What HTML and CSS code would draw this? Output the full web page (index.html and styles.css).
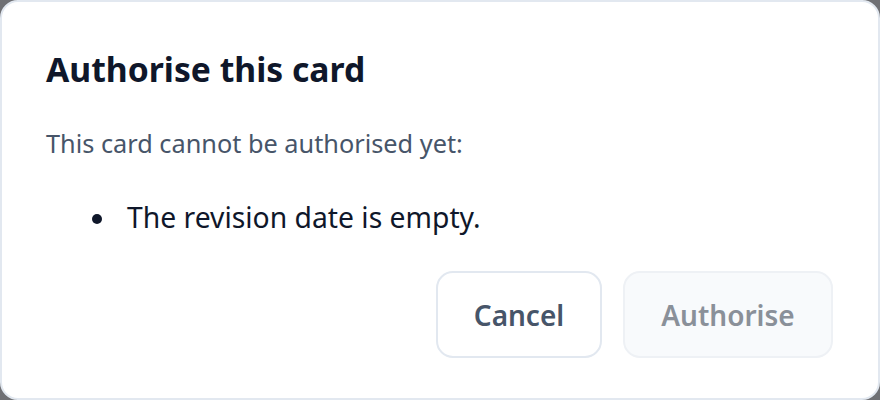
FILE: index.html
```html
<!DOCTYPE html>
<html lang="en">
<head>
<meta charset="utf-8">
<title>Authorise this card</title>
<link rel="stylesheet" href="styles.css">
</head>
<body>
<div class="dialog">
  <h1 class="title">Authorise this card</h1>
  <p class="lead">This card cannot be authorised yet:</p>
  <ul class="reasons">
    <li class="reason">The revision date is empty.</li>
  </ul>
  <div class="actions">
    <button class="btn btn-cancel" type="button">Cancel</button>
    <button class="btn btn-primary" type="button" disabled>Authorise</button>
  </div>
</div>
</body>
</html>
```

FILE: styles.css
```css
html, body {
  margin: 0;
  padding: 0;
  background: #6f7074;
}
body {
  width: 880px;
  height: 400px;
  font-family: "Noto Sans", "Open Sans", "DejaVu Sans", sans-serif;
}
.dialog {
  box-sizing: border-box;
  width: 880px;
  height: 400px;
  background: #ffffff;
  border: 2px solid #e2e8f0;
  border-radius: 18px;
  padding: 43px 45px 0 44px;
  display: flex;
  flex-direction: column;
}
.title {
  margin: 0;
  font-size: 33.7px;
  line-height: 48px;
  font-weight: 700;
  color: #0f172a;
}
.lead {
  margin: 32px 0 0;
  font-size: 25.3px;
  line-height: 36px;
  color: #475569;
}
.reasons {
  list-style: none;
  margin: 36px 0 0;
  padding: 0 0 0 46px;
}
.reason {
  display: flex;
  align-items: center;
  gap: 25px;
  font-size: 28.3px;
  line-height: 40px;
  color: #0f172a;
}
.reason::before {
  content: "";
  width: 10px;
  height: 10px;
  border-radius: 50%;
  background: #0f172a;
  flex: none;
  margin-top: 3px;
}
.actions {
  display: flex;
  justify-content: flex-end;
  gap: 21px;
  margin-top: 34px;
}
.btn {
  box-sizing: border-box;
  height: 87px;
  border-radius: 17px;
  border: 2px solid #e2e8f0;
  background: #ffffff;
  font-family: inherit;
  font-size: 28px;
  font-weight: 600;
  padding: 0;
}
.btn-cancel {
  width: 166px;
  color: #475569;
}
.btn-primary {
  width: 210px;
  background: #f8fafc;
  border-color: #eef1f5;
  color: #8a9099;
}
```
